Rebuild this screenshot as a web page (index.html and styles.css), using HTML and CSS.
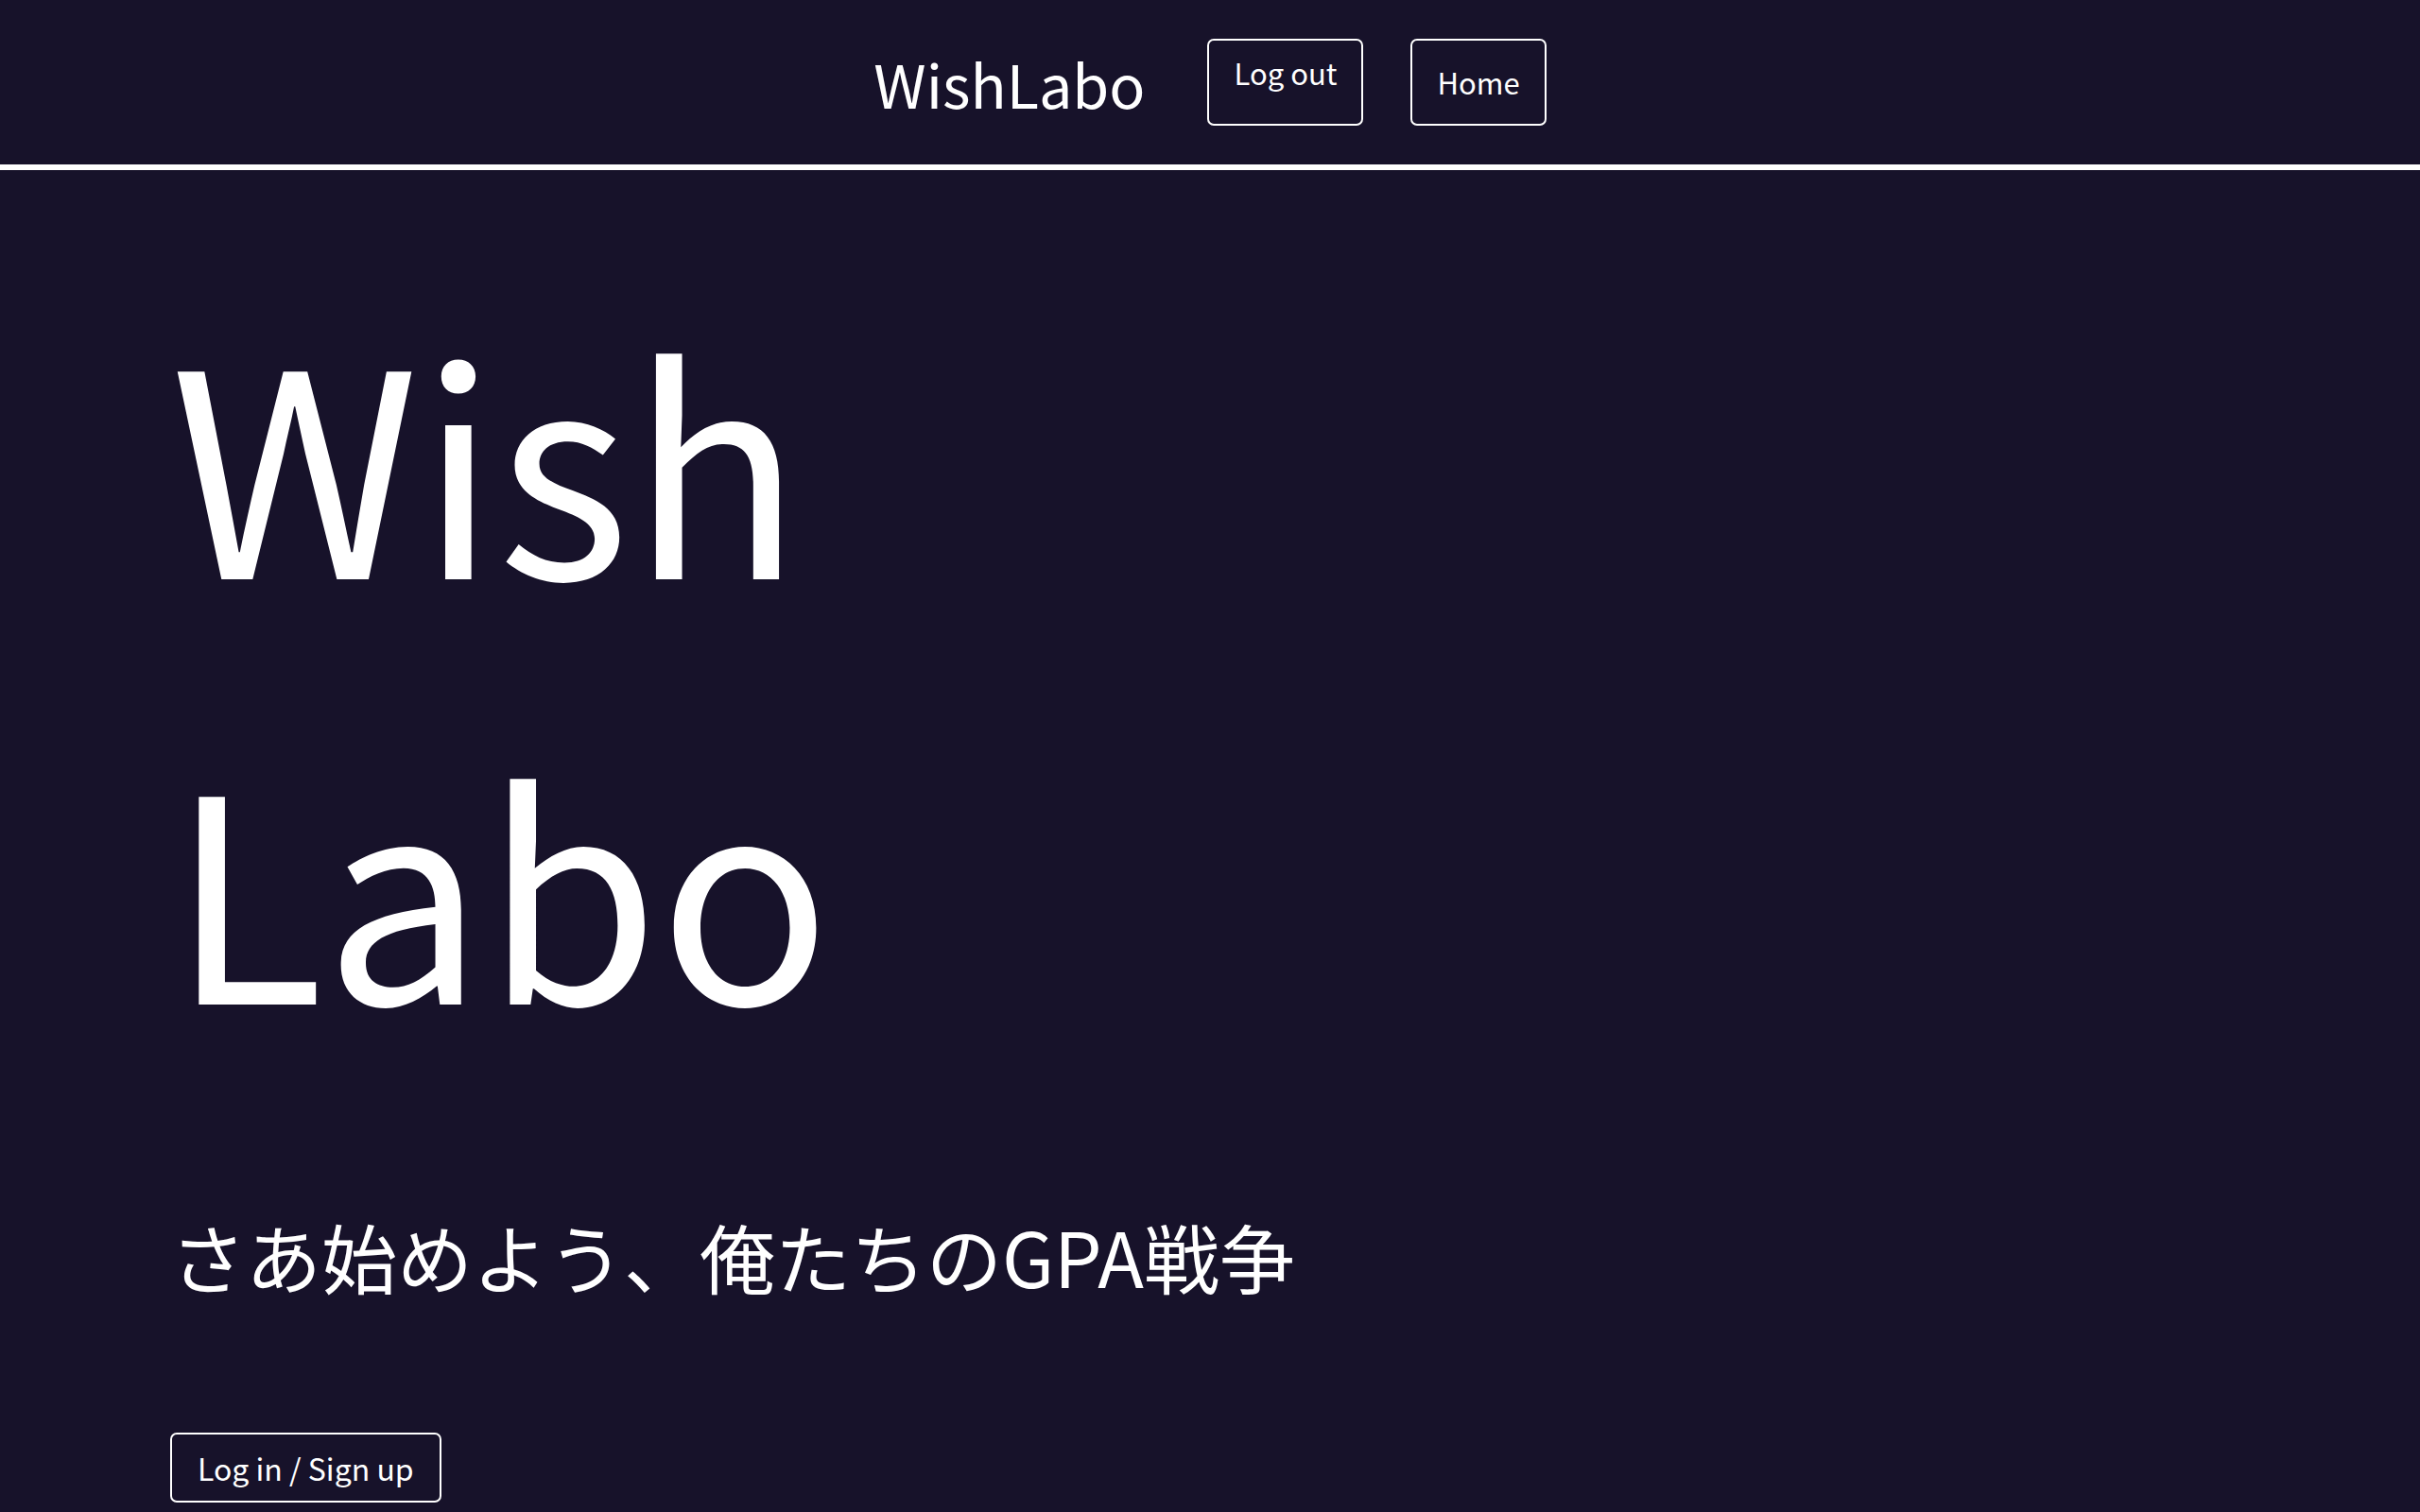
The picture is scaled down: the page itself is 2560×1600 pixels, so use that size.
FILE: index.html
```html
<!DOCTYPE html>
<html lang="ja">
<head>
<meta charset="utf-8">
<title>WishLabo</title>
<link rel="stylesheet" href="styles.css">
</head>
<body>
<header class="site-header">
  <div class="brand">WishLabo</div>
  <nav class="nav">
    <form class="logout-form"><button type="button" class="btn btn-logout">Log out</button></form>
    <a class="btn btn-home" href="#">Home</a>
  </nav>
</header>
<main class="hero">
  <h1 class="hero-title">Wish<br>Labo</h1>
  <p class="hero-sub">さあ始めよう、俺たちのGPA戦争</p>
  <a class="btn btn-login" href="#">Log in / Sign up</a>
</main>
</body>
</html>
```
FILE: styles.css
```css
html, body {
  margin: 0;
  padding: 0;
}
body {
  background: #17122a;
  color: #ffffff;
  font-family: "Noto Sans CJK JP", "Noto Sans", sans-serif;
  min-height: 1600px;
  overflow: hidden;
}
.site-header {
  height: 174px;
  border-bottom: 6px solid #ffffff;
  display: flex;
  justify-content: center;
  align-items: center;
}
.brand {
  font-size: 63px;
  line-height: 1;
  margin-right: 66px;
}
.nav {
  display: flex;
  align-items: center;
  gap: 50px;
}
.logout-form {
  margin: 0;
}
.btn {
  box-sizing: border-box;
  border: 2px solid #ffffff;
  border-radius: 7px;
  color: #ffffff;
  background: transparent;
  text-decoration: none;
  font-family: "Noto Sans CJK JP", "Noto Sans", sans-serif;
  font-size: 31px;
  display: flex;
  padding: 0 26px;
}
.btn-logout {
  height: 92px;
  align-items: flex-start;
  padding-top: 11px;
  line-height: 46px;
  cursor: pointer;
}
.btn-home {
  height: 92px;
  align-items: center;
  line-height: 46px;
}
.hero {
  padding-left: 180px;
}
.hero-title {
  margin: 77px 0 0 0;
  font-size: 300px;
  font-weight: 400;
  line-height: 450px;
}
.hero-sub {
  margin: 113px 0 0 0;
  font-size: 80px;
}
.btn-login {
  display: inline-flex;
  margin-top: 130px;
  height: 74px;
  align-items: center;
  padding: 0 27px;
  font-size: 32px;
}
```
